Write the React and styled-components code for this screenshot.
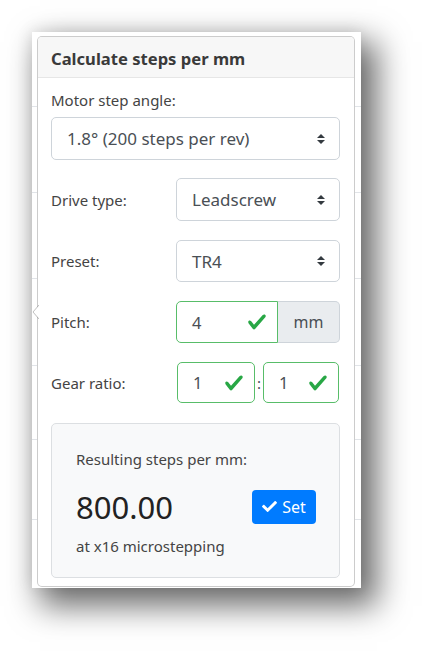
import React from "react";
import styled, { createGlobalStyle } from "styled-components";
import { FaCheck } from "react-icons/fa";

const GlobalStyle = createGlobalStyle`
  html, body { margin: 0; padding: 0; background: #fff; }
  body { font-family: "Noto Sans", "Open Sans", sans-serif; }
  * { box-sizing: border-box; }
`;

const Page = styled.div`
  width: 426px;
  height: 654px;
  padding: 32px 0 0 32px;
  overflow: hidden;
`;

const Frame = styled.div`
  display: flex;
  width: 329px;
  height: 556px;
  background: #fff;
  box-shadow: 12px 14px 30px 4px rgba(0, 0, 0, 0.58), -2px -2px 14px rgba(0, 0, 0, 0.08);
`;

const lineGradients = (lines) =>
  lines
    .map((y) => `linear-gradient(#e1e4e8, #e1e4e8) 0 ${y}px / 100% 1px no-repeat`)
    .join(", ");

const Strip = styled.div`
  flex: 0 0 ${(p) => p.$w}px;
  background: ${(p) => lineGradients(p.$lines)};
`;

const Popover = styled.div`
  position: relative;
  width: 318px;
  height: 551px;
  margin-top: 4px;
  border: 1px solid rgba(0, 0, 0, 0.2);
  border-radius: 5px;
  background: #fff;
  display: flex;
  flex-direction: column;
`;

const Arrow = styled.svg`
  position: absolute;
  left: -6px;
  top: 268px;
`;

const Header = styled.div`
  height: 41px;
  flex: 0 0 41px;
  display: flex;
  align-items: center;
  padding: 2px 13px 0;
  background: #f7f7f7;
  border-bottom: 1px solid #e6e6e6;
  border-radius: 4px 4px 0 0;
  font-size: 16.6px;
  font-weight: 700;
  color: #3a3a3a;
`;

const Body = styled.div`
  padding: 11px 14px 8px 13px;
  display: flex;
  flex-direction: column;
`;

const Label = styled.div`
  font-size: 15px;
  line-height: 22px;
  color: #444;
  margin-bottom: ${(p) => p.$mb || 0}px;
`;

const SelectBox = styled.div`
  height: ${(p) => p.$h}px;
  border: 1px solid #ced4da;
  border-radius: 5px;
  padding: 0 14px 0 15px;
  display: flex;
  align-items: center;
  justify-content: space-between;
  font-size: 17px;
  color: #4a4f55;
  background: #fff;
`;

const FormRow = styled.div`
  display: grid;
  grid-template-columns: 125px 1fr;
  align-items: center;
  margin-top: ${(p) => p.$mt}px;
`;

const InputGroup = styled.div`
  display: flex;
  height: 42px;
`;

const ValidInput = styled.div`
  flex: 0 0 ${(p) => p.$w}px;
  height: ${(p) => p.$h || 42}px;
  border: 1px solid #58bd69;
  border-radius: ${(p) => (p.$joined ? "5px 0 0 5px" : "5px")};
  display: flex;
  align-items: center;
  justify-content: space-between;
  padding: 0 ${(p) => p.$pr}px 0 15px;
  font-size: 16.5px;
  color: #4a4f55;
  background: #fff;
`;

const Addon = styled.div`
  flex: 1;
  display: flex;
  align-items: center;
  justify-content: center;
  background: #e9ecef;
  border: 1px solid #ced4da;
  border-left: none;
  border-radius: 0 5px 5px 0;
  font-size: 16px;
  color: #4a4f55;
`;

const RatioGroup = styled.div`
  display: flex;
  align-items: center;
  padding-left: 1px;
`;

const Colon = styled.span`
  width: 8px;
  text-align: center;
  font-size: 15px;
  color: #4a4f55;
`;

const ResultBox = styled.div`
  margin-top: 20px;
  height: 155px;
  background: #f8f9fa;
  border: 1px solid #dcdfe2;
  border-radius: 5px;
  padding: 24px 23px 0 24px;
  display: flex;
  flex-direction: column;
`;

const ResultRow = styled.div`
  display: flex;
  align-items: center;
  justify-content: space-between;
  height: 40px;
  margin-top: 17px;
`;

const ResultValue = styled.div`
  font-size: 31px;
  line-height: 40px;
  color: #222;
`;

const SetButton = styled.button`
  width: 64px;
  height: 34px;
  border: none;
  border-radius: 4px;
  background: #007bff;
  color: #fff;
  display: flex;
  align-items: center;
  justify-content: center;
  gap: 5px;
  padding: 0 0 1px;
  font-family: inherit;
  font-size: 16px;
`;

const Note = styled.div`
  margin-top: 8px;
  font-size: 15px;
  line-height: 22px;
  color: #444;
`;

const SortIcon = () => (
  <svg width="8" height="10" viewBox="0 0 4 5">
    <path d="M2 0L0 2h4zm0 5L0 3h4z" fill="#343a40" />
  </svg>
);

const ValidIcon = () => (
  <svg width="20" height="20" viewBox="0 0 8 8">
    <path
      d="M2.3 6.73L.6 4.53c-.4-1.04.46-1.4 1.1-.8l1.1 1.4 3.4-3.8c.6-.63 1.6-.27 1.2.7l-4 4.6c-.43.5-.8.4-1.1.1z"
      fill="#28a745"
    />
  </svg>
);

const lines = [74, 160, 246, 333, 407, 487];

export default function App() {
  return (
    <>
      <GlobalStyle />
      <Page>
        <Frame>
          <Strip $w={5} $lines={lines} />
          <Popover>
            <Arrow width="7" height="14" viewBox="0 0 7 14">
              <path d="M7 0 L1 7 L7 14 Z" fill="#fff" />
              <path d="M7 0 L1 7 L7 14" fill="none" stroke="rgba(0,0,0,0.25)" strokeWidth="1" />
            </Arrow>
            <Header>Calculate steps per mm</Header>
            <Body>
              <Label $mb={6}>Motor step angle:</Label>
              <SelectBox $h={43}>
                <span>1.8° (200 steps per rev)</span>
                <SortIcon />
              </SelectBox>
              <FormRow $mt={18}>
                <Label>Drive type:</Label>
                <SelectBox $h={43}>
                  <span>Leadscrew</span>
                  <SortIcon />
                </SelectBox>
              </FormRow>
              <FormRow $mt={19}>
                <Label>Preset:</Label>
                <SelectBox $h={42}>
                  <span>TR4</span>
                  <SortIcon />
                </SelectBox>
              </FormRow>
              <FormRow $mt={19}>
                <Label>Pitch:</Label>
                <InputGroup>
                  <ValidInput $w={102} $pr={10} $joined>
                    <span>4</span>
                    <ValidIcon />
                  </ValidInput>
                  <Addon>mm</Addon>
                </InputGroup>
              </FormRow>
              <FormRow $mt={19}>
                <Label>Gear ratio:</Label>
                <RatioGroup>
                  <ValidInput $w={78} $h={41} $pr={10}>
                    <span>1</span>
                    <ValidIcon />
                  </ValidInput>
                  <Colon>:</Colon>
                  <ValidInput $w={76} $h={41} $pr={10}>
                    <span>1</span>
                    <ValidIcon />
                  </ValidInput>
                </RatioGroup>
              </FormRow>
              <ResultBox>
                <Label>Resulting steps per mm:</Label>
                <ResultRow>
                  <ResultValue>800.00</ResultValue>
                  <SetButton>
                    <FaCheck size={15} />
                    <span>Set</span>
                  </SetButton>
                </ResultRow>
                <Note>at x16 microstepping</Note>
              </ResultBox>
            </Body>
          </Popover>
          <Strip $w={6} $lines={lines} />
        </Frame>
      </Page>
    </>
  );
}
